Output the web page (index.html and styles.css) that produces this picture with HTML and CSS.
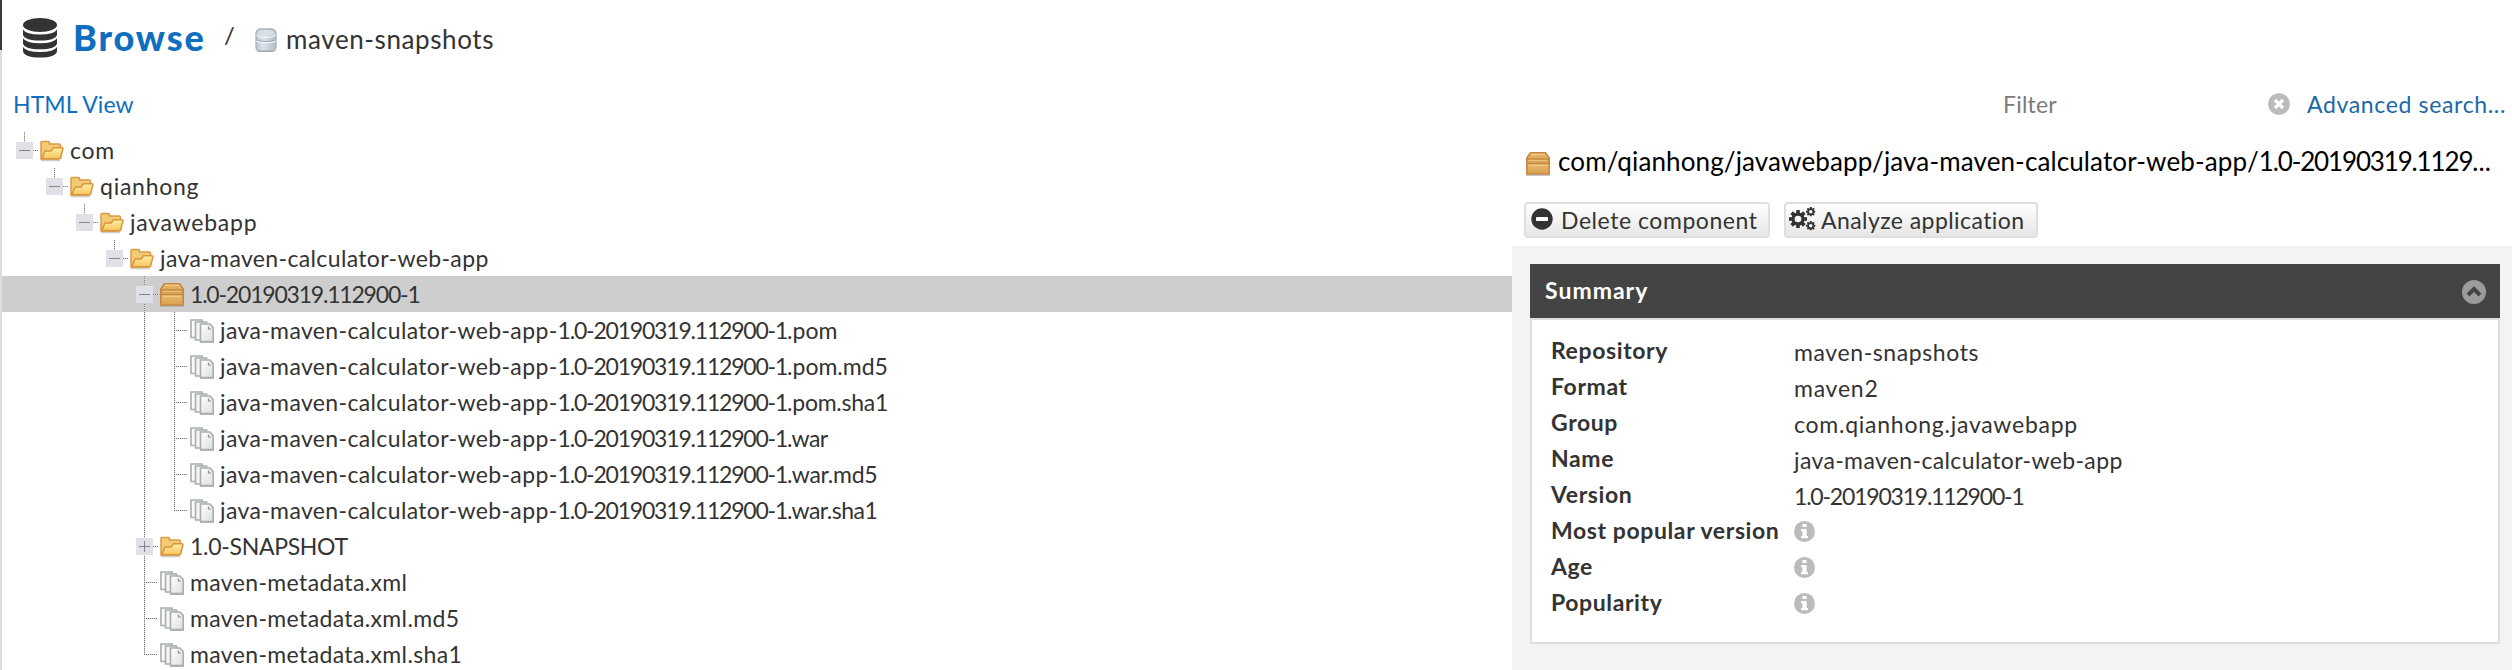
FILE: index.html
```html
<!DOCTYPE html>
<html lang="en">
<head>
<meta charset="utf-8">
<title>Browse / maven-snapshots</title>
<link rel="stylesheet" href="styles.css">
</head>
<body>
<svg class="defs" aria-hidden="true">
  <defs>
    <linearGradient id="gFolder" x1="0" y1="0" x2="0" y2="1"><stop offset="0" stop-color="#fff0a8"/><stop offset="1" stop-color="#f6c65c"/></linearGradient>
    <linearGradient id="gBox" x1="0" y1="0" x2="0" y2="1"><stop offset="0" stop-color="#e8bd70"/><stop offset=".45" stop-color="#d79c4c"/><stop offset=".5" stop-color="#e9bd70"/><stop offset="1" stop-color="#d9a050"/></linearGradient>
    <linearGradient id="gPage" x1="0" y1="0" x2="1" y2="1"><stop offset="0" stop-color="#fff"/><stop offset="1" stop-color="#dcdfdf"/></linearGradient>
    <linearGradient id="gDb" x1="0" y1="0" x2="1" y2="0"><stop offset="0" stop-color="#b8c2cd"/><stop offset=".35" stop-color="#dde3ea"/><stop offset="1" stop-color="#b3bdc9"/></linearGradient>
  </defs>
  <symbol id="folder" viewBox="0 0 24 24">
    <path d="M1 21.5h19" stroke="#ccc" stroke-width="1.5"/>
    <path d="M1 20V3.500q0-1 1-1h6.500q1 0 1 1V5H19q1.500 0 1.500 1.500V19L18 20z" fill="#f3cb75" stroke="#d89b4a" stroke-width="1.500"/>
    <path d="M1.800 19.800L4.500 13q.4-1 1.400-1H11l2.500-3.300h8.300q1.400 0 1.100 1.300l-2.300 8.800q-.3 1-1.300 1z" fill="url(#gFolder)" stroke="#d9953d" stroke-width="1.500" stroke-linejoin="round"/>
  </symbol>
  <symbol id="box" viewBox="0 0 24 24">
    <path d="M0 23.200h24" stroke="#999" stroke-opacity=".6" stroke-width="1.500"/>
    <path d="M4.500.8h15L23.200 6v16H.8V6z" fill="url(#gBox)" stroke="#c58640" stroke-width="1.500" stroke-linejoin="round"/>
    <path d="M5 2.300h14M2.500 8.300h19M2.500 13.200h19" stroke="#efcf8e" stroke-width="1"/>
    <path d="M1 7h22M1 11.700h22" stroke="#bd7c37" stroke-width="1"/>
  </symbol>
  <symbol id="pages" viewBox="0 0 24 24">
    <path d="M1 1h11v17.500H1z" fill="#fafafa" stroke="#a9adad" stroke-width="1.600"/>
    <path d="M5.500 3h11v18h-11z" fill="#f4f4f4" stroke="#a9adad" stroke-width="1.600"/>
    <path d="M10.500 5H20l3.200 3.500V22.500H10.500z" fill="url(#gPage)" stroke="#a9adad" stroke-width="1.600"/>
    <path d="M18.500 7.500v2.500h2.500" fill="none" stroke="#8d9292" stroke-width="1.200"/>
    <path d="M10 23.300h14" stroke="#b0b3b3" stroke-width="1.400"/>
  </symbol>
  <symbol id="info" viewBox="0 0 21 21">
    <circle cx="10.500" cy="10.500" r="10.500" fill="#bbb"/>
    <path d="M8.400 3h4.200v3H8.400zM7 8h5.600v7H14v2.300H7V15h1.400v-4.700H7z" fill="#fff"/>
  </symbol>
  <symbol id="gear" viewBox="-10 -10 20 20">
    <g fill="#333"><path d="M-2-10h4v20h-4z"/><path d="M-2-10h4v20h-4z" transform="rotate(45)"/><path d="M-2-10h4v20h-4z" transform="rotate(90)"/><path d="M-2-10h4v20h-4z" transform="rotate(135)"/></g>
    <circle r="5.500" fill="#f6f6f6" stroke="#333" stroke-width="3.600"/>
  </symbol>
</svg>

<div class="app">
  <header class="header">
    <svg class="db-icon" viewBox="0 0 34 40">
      <g fill="#333"><ellipse cx="17" cy="7" rx="17" ry="7"/>
      <path d="M0 11.500q3 5 17 5t17-5v5.500q-2 5.500-17 5.500T0 17z"/>
      <path d="M0 20.300q3 5 17 5t17-5v5.500q-2 5.500-17 5.500T0 25.800z"/>
      <path d="M0 29q3 5 17 5t17-5v4.500Q32 39.500 17 39.500T0 33.500z"/></g>
    </svg>
    <h1 class="title">Browse</h1>
    <span class="slash">/</span>
    <svg class="repo-icon" viewBox="0 0 22 24">
      <rect x="1" y="1" width="20" height="22.500" rx="4.500" fill="url(#gDb)" stroke="#a9b3be" stroke-width="1.300"/>
      <ellipse cx="11" cy="5" rx="8.500" ry="3" fill="#d8dfe6"/>
      <path d="M1.500 6.500q2 3 9.500 3t9.500-3M1.500 13q2 1.500 9.500 1.500t9.500-1.500" fill="none" stroke="#f4f7fa" stroke-width="1.300"/>
      <path d="M2 12q2 1.500 9 1.500t9-1.500" fill="none" stroke="#9aa6b3"/>
      <path d="M3 23h16" stroke="#9fa8b2"/>
    </svg>
    <span class="crumb">maven-snapshots</span>
  </header>

  <div class="toolbar">
    <a class="link html-view">HTML View</a>
    <span class="filter">Filter</span>
    <svg class="clear" viewBox="0 0 22 22"><circle cx="11" cy="11" r="10.800" fill="#bbb"/><path d="M7 7l8 8M15 7l-8 8" stroke="#fff" stroke-width="3.400"/></svg>
    <a class="link advanced">Advanced search...</a>
  </div>

  <main class="main">
    <div class="tree">
      <div class="row"><i class="cell top minus"></i><svg class="ico"><use href="#folder"/></svg><span class="label">com</span></div>
      <div class="row"><i class="cell"></i><i class="cell top minus"></i><svg class="ico"><use href="#folder"/></svg><span class="label">qianhong</span></div>
      <div class="row"><i class="cell"></i><i class="cell"></i><i class="cell top minus"></i><svg class="ico"><use href="#folder"/></svg><span class="label">javawebapp</span></div>
      <div class="row"><i class="cell"></i><i class="cell"></i><i class="cell"></i><i class="cell top minus"></i><svg class="ico"><use href="#folder"/></svg><span class="label path">java-maven-calculator-web-app</span></div>
      <div class="row selected"><i class="cell"></i><i class="cell"></i><i class="cell"></i><i class="cell"></i><i class="cell line minus"></i><svg class="ico"><use href="#box"/></svg><span class="label ver">1.0-20190319.112900-1</span></div>
      <div class="row"><i class="cell"></i><i class="cell"></i><i class="cell"></i><i class="cell"></i><i class="cell line"></i><i class="cell line arm"></i><svg class="ico"><use href="#pages"/></svg><span class="label path">java-maven-calculator-web-app-<span class="ver">1.0-20190319.112900-1</span><span class="ext">.pom</span></span></div>
      <div class="row"><i class="cell"></i><i class="cell"></i><i class="cell"></i><i class="cell"></i><i class="cell line"></i><i class="cell line arm"></i><svg class="ico"><use href="#pages"/></svg><span class="label path">java-maven-calculator-web-app-<span class="ver">1.0-20190319.112900-1</span><span class="ext">.pom.md5</span></span></div>
      <div class="row"><i class="cell"></i><i class="cell"></i><i class="cell"></i><i class="cell"></i><i class="cell line"></i><i class="cell line arm"></i><svg class="ico"><use href="#pages"/></svg><span class="label path">java-maven-calculator-web-app-<span class="ver">1.0-20190319.112900-1</span><span class="ext tight">.pom.sha1</span></span></div>
      <div class="row"><i class="cell"></i><i class="cell"></i><i class="cell"></i><i class="cell"></i><i class="cell line"></i><i class="cell line arm"></i><svg class="ico"><use href="#pages"/></svg><span class="label path">java-maven-calculator-web-app-<span class="ver">1.0-20190319.112900-1</span><span class="ext war">.war</span></span></div>
      <div class="row"><i class="cell"></i><i class="cell"></i><i class="cell"></i><i class="cell"></i><i class="cell line"></i><i class="cell line arm"></i><svg class="ico"><use href="#pages"/></svg><span class="label path">java-maven-calculator-web-app-<span class="ver">1.0-20190319.112900-1</span><span class="ext tight">.war.md5</span></span></div>
      <div class="row"><i class="cell"></i><i class="cell"></i><i class="cell"></i><i class="cell"></i><i class="cell line"></i><i class="cell half arm"></i><svg class="ico"><use href="#pages"/></svg><span class="label path">java-maven-calculator-web-app-<span class="ver">1.0-20190319.112900-1</span><span class="ext war">.war.sha1</span></span></div>
      <div class="row"><i class="cell"></i><i class="cell"></i><i class="cell"></i><i class="cell"></i><i class="cell line minus plus"></i><svg class="ico"><use href="#folder"/></svg><span class="label snap">1.0-SNAPSHOT</span></div>
      <div class="row"><i class="cell"></i><i class="cell"></i><i class="cell"></i><i class="cell"></i><i class="cell line arm"></i><svg class="ico"><use href="#pages"/></svg><span class="label meta">maven-metadata.xml</span></div>
      <div class="row"><i class="cell"></i><i class="cell"></i><i class="cell"></i><i class="cell"></i><i class="cell line arm"></i><svg class="ico"><use href="#pages"/></svg><span class="label meta">maven-metadata.xml.md5</span></div>
      <div class="row"><i class="cell"></i><i class="cell"></i><i class="cell"></i><i class="cell"></i><i class="cell half arm"></i><svg class="ico"><use href="#pages"/></svg><span class="label meta">maven-metadata.xml.sha1</span></div>
    </div>

    <section class="detail">
      <div class="detail-title"><svg class="ico"><use href="#box"/></svg><span class="detail-name">com/qianhong/javawebapp/java-maven-calculator-web-app/<span class="detail-ver">1.0-20190319.1129</span>...</span></div>
      <div class="actions">
        <div class="btn delete">
          <svg class="btn-icon" viewBox="0 0 22 22"><circle cx="11" cy="11" r="10.700" fill="#333"/><rect x="5" y="9" width="12" height="4" rx=".8" fill="#fff"/></svg>
          <span class="btn-text">Delete component</span>
        </div>
        <div class="btn analyze">
          <svg class="btn-icon gears" viewBox="0 0 27 24"><use href="#gear" x="0" y="3" width="18" height="18"/><use href="#gear" x="17" y="0" width="9.500" height="9.500"/><use href="#gear" x="17" y="14" width="9.500" height="9.500"/></svg>
          <span class="btn-text">Analyze application</span>
        </div>
      </div>
      <div class="detail-body">
        <div class="panel">
          <div class="panel-head"><span>Summary</span><svg class="collapse" viewBox="0 0 24 24"><circle cx="12" cy="12" r="12" fill="#9b9b9b"/><path d="M6 15l6-6 6 6" fill="none" stroke="#444" stroke-width="4"/></svg></div>
          <dl class="facts">
            <dt>Repository</dt><dd>maven-snapshots</dd>
            <dt>Format</dt><dd class="wide">maven2</dd>
            <dt>Group</dt><dd class="wide">com.qianhong.javawebapp</dd>
            <dt>Name</dt><dd class="path">java-maven-calculator-web-app</dd>
            <dt>Version</dt><dd class="ver">1.0-20190319.112900-1</dd>
            <dt>Most popular version</dt><dd><svg class="info"><use href="#info"/></svg></dd>
            <dt>Age</dt><dd><svg class="info"><use href="#info"/></svg></dd>
            <dt>Popularity</dt><dd><svg class="info"><use href="#info"/></svg></dd>
          </dl>
        </div>
      </div>
    </section>
  </main>
</div>
</body>
</html>
```
FILE: styles.css
```css
* { box-sizing: border-box; }
body {
  margin: 0;
  background: #fff;
  color: #333;
  font: 23px/34px Lato, "Open Sans", sans-serif;
  letter-spacing: .6px;
  white-space: nowrap;
  overflow: hidden;
}
.defs { display: block; width: 0; height: 0; }
.app {
  height: 670px;
  padding-left: 2px;
  background: linear-gradient(#3c3c3c 50px, #ddd 50px) 0 0 / 2px 100% no-repeat;
  overflow: hidden;
}
.ico { width: 24px; height: 24px; flex: none; }

/* Header */
.header { display: flex; height: 72px; align-items: flex-start; padding: 18px 0 0 21px; }
.db-icon { width: 34px; height: 40px; }
.title { margin: 0 0 0 16px; width: 151px; font-size: 36px; line-height: 38px; font-weight: 900; letter-spacing: 1.9px; color: #106ebe; }
.slash { width: 31px; line-height: 34px; font-size: 24px; }
.repo-icon { width: 22px; height: 24px; margin-top: 10px; }
.crumb { margin-left: 9px; font-size: 26px; line-height: 42px; }

/* Toolbar */
.toolbar { display: flex; height: 60px; align-items: center; padding: 4px 6px 0 11px; }
.link { color: #106ebe; }
.html-view { letter-spacing: .1px; margin-right: auto; }
.filter { width: 265px; color: #7b7b7b; letter-spacing: .2px; }
.clear { width: 22px; height: 22px; margin: 0 17px 0 0; }
.advanced { width: 199px; color: #1b68a6; letter-spacing: .65px; }

/* Tree */
.main { display: grid; grid-template-columns: 1510px 1fr; height: 538px; }
.row { display: flex; height: 36px; align-items: center; padding-left: 8px; }
.row.selected { background: #cecece; }
.row .ico { margin-top: 1px; }
.label { margin: 0 0 0 6px; letter-spacing: .75px; }
.cell {
  --v: repeating-linear-gradient(#7d7d7d 0 1px, #d8d8d8 1px 2px);
  --h: repeating-linear-gradient(90deg, #7d7d7d 0 1px, #d8d8d8 1px 2px);
  --dash: linear-gradient(#85878a, #85878a);
  --square: linear-gradient(#dfe1e6, #dfe1e6);
  width: 30px;
  height: 36px;
  flex: none;
  background-repeat: no-repeat;
}
.cell.line { background-image: var(--v); background-size: 1px 36px; background-position: 14px 0; }
.cell.half { background-image: var(--v); background-size: 1px 19px; background-position: 14px 0; }
.cell.arm { background-image: var(--v), var(--h); background-size: 1px 36px, 13px 1px; background-position: 14px 0, 14px 18px; }
.cell.half.arm { background-size: 1px 19px, 13px 1px; }
.cell.minus {
  background-image: var(--dash), var(--square), var(--h), var(--v);
  background-size: 11px 1px, 17px 17px, 5px 1px, 1px 36px;
  background-position: 9px 18px, 6px 10px, 23px 18px, 14px 0;
}
.cell.top.minus { background-size: 11px 1px, 17px 17px, 5px 1px, 1px 10px; }
.cell.minus.plus {
  background-image: var(--dash), var(--dash), var(--square), var(--h), var(--v);
  background-size: 11px 1px, 1px 11px, 17px 17px, 5px 1px, 1px 36px;
  background-position: 9px 18px, 14px 13px, 6px 10px, 23px 18px, 14px 0;
}
.path { letter-spacing: .36px; }
.ver { letter-spacing: -1.2px; }
.ext { letter-spacing: 0; }
.ext.tight { letter-spacing: -.25px; }
.ext.war { letter-spacing: -.5px; }
.snap { letter-spacing: -.3px; }
.meta { letter-spacing: .36px; }

/* Component details */
.detail { display: flex; flex-direction: column; }
.detail-title { display: flex; align-items: center; height: 56px; padding: 8px 0 0 14px; color: #000; font-size: 26px; }
.detail-name { margin: -6px 0 0 8px; letter-spacing: .12px; }
.detail-ver { letter-spacing: -1.15px; }
.actions { display: flex; gap: 14px; margin-top: 14px; padding-left: 12px; height: 44px; align-items: flex-start; }
.btn {
  display: flex;
  height: 36px;
  align-items: center;
  border: 2px solid #dfdfdf;
  border-radius: 4px;
  background: linear-gradient(#fff, #e6e6e6);
  padding-left: 5px;
}
.delete { width: 246px; }
.analyze { width: 254px; padding-left: 3px; }
.btn-icon { width: 22px; height: 22px; margin-top: -2px; }
.btn-icon.gears { width: 27px; height: 24px; }
.btn-text { margin: 0 0 0 8px; letter-spacing: .55px; }
.analyze .btn-text { margin-left: 5px; letter-spacing: .43px; }
.detail-body { flex: 1; background: #f3f3f3; padding: 18px 12px 0 18px; }
.panel { height: 380px; }
.panel-head {
  display: flex;
  height: 54px;
  align-items: center;
  justify-content: space-between;
  padding: 0 14px 0 15px;
  background: #444;
  color: #fff;
  font-weight: 700;
  letter-spacing: 1px;
}
.panel-head span { margin-top: -3px; }
.collapse { width: 24px; height: 24px; margin-top: 2px; }
.facts {
  display: grid;
  grid-template-columns: 243px 1fr;
  grid-auto-rows: 36px;
  height: 326px;
  margin: 0;
  padding: 12px 0 0 19px;
  border: 2px solid #ddd;
  background: #fff;
  line-height: 36px;
}
.facts dt { font-weight: 700; }
.facts dd { margin: 2px 0 0; }
.facts .wide { letter-spacing: .75px; }
.info { display: block; width: 21px; height: 21px; margin-top: 7px; }
```
